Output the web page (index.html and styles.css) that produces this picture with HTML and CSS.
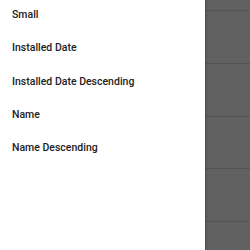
FILE: index.html
```html
<!DOCTYPE html>
<html>
<head>
  <title>Sort</title>
  <link rel="stylesheet" href="styles.css">
</head>
<body>
  <div class="screen">
    <div class="menu">
      <div class="menu-item">Small</div>
      <div class="menu-item">Installed Date</div>
      <div class="menu-item">Installed Date Descending</div>
      <div class="menu-item">Name</div>
      <div class="menu-item">Name Descending</div>
    </div>
    <div class="backdrop">
      <div class="row first"></div>
      <div class="row"></div>
      <div class="row"></div>
      <div class="row"></div>
      <div class="row"></div>
      <div class="row"></div>
    </div>
  </div>
</body>
</html>
```

FILE: styles.css
```css
* {
  margin: 0;
  padding: 0;
  box-sizing: border-box;
}

body {
  width: 250px;
  height: 250px;
  overflow: hidden;
  font-family: Roboto, "Noto Sans", sans-serif;
  background: #616161;
}

.screen {
  display: flex;
  height: 250px;
  overflow: hidden;
}

.menu {
  width: 205px;
  flex-shrink: 0;
  background: #ffffff;
  padding-top: 1px;
  box-shadow: 1px 0 2px rgba(0, 0, 0, 0.25);
  position: relative;
  z-index: 1;
}

.menu-item {
  height: 33.3px;
  display: flex;
  align-items: center;
  padding-left: 12px;
  font-size: 10.5px;
  font-weight: 500;
  color: #222222;
  margin-top: -3px;
  margin-bottom: 3px;
}

.backdrop {
  flex: 1;
  display: flex;
  flex-direction: column;
}

.row {
  height: 52.75px;
  flex-shrink: 0;
  border-bottom: 1px solid #545454;
}

.row.first {
  height: 11px;
}
```
